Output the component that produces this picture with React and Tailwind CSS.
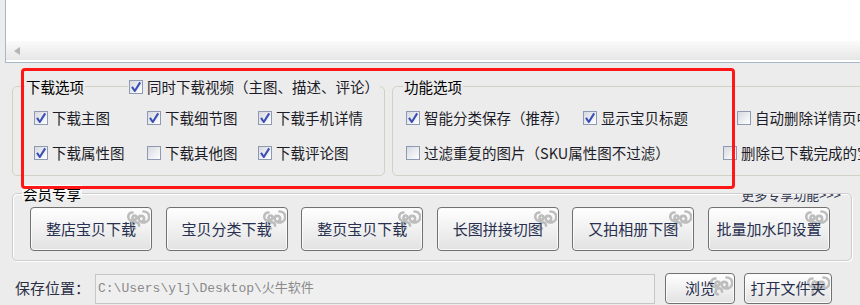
import React from 'react'

const cjk = "font-['Noto_Sans_CJK_SC',sans-serif]"

function Box({ checked }) {
  return (
    <span className="relative inline-block h-[14px] w-[14px] shrink-0 border border-[#8e9ab2] bg-gradient-to-br from-[#d6d9e1] to-white">
      {checked && (
        <svg viewBox="0 0 14 14" className="absolute left-[-1px] top-[-1px] h-[14px] w-[14px]">
          <path d="M3 6.8 L5.8 11 L11.2 2.4" fill="none" stroke="#3b4fb4" strokeWidth="2.1" strokeLinejoin="round" />
        </svg>
      )}
    </span>
  )
}

function Check({ checked, label, className = '' }) {
  return (
    <label className={`flex h-[20px] shrink-0 items-center gap-[4px] whitespace-nowrap text-[14.5px] leading-[20px] text-[#1c1c28] ${className}`}>
      <Box checked={checked} />
      {label}
    </label>
  )
}

function Swirl() {
  return (
    <svg viewBox="0 0 28 22" className="pointer-events-none absolute right-[1px] top-[1px] h-[22px] w-[28px]">
      <g fill="none" stroke="#bdbdbd" strokeWidth="2.6" strokeLinecap="round">
        <path d="M21.5 2.5 a5.5 5.5 0 1 1 -5 7.2 a2.8 2.8 0 1 1 3.1 2.8" />
        <path d="M10.5 3.5 a4.2 4.2 0 1 0 4 5.3 a2 2 0 1 0 -2.4 1.7" />
        <path d="M13 19.5 a3.2 3.2 0 1 1 4 -2.8" />
      </g>
    </svg>
  )
}

function Btn({ children, className = '' }) {
  return (
    <button className={`relative flex shrink-0 items-center justify-center rounded-[4px] border border-[#717171] bg-gradient-to-b from-white to-[#e2e2e2] text-[#28304f] shadow-[inset_0_0_0_1px_#fafafa] ${className}`}>
      <Swirl />
      <span className="relative">{children}</span>
    </button>
  )
}

export default function App() {
  return (
    <div className={`relative h-[305px] w-[860px] overflow-hidden bg-[#ececec] ${cjk}`}>
      {/* result list */}
      <div className="ml-[5px] flex h-[63px] flex-col border-b border-l border-[#a6b8ca] bg-white">
        <div className="flex-1" />
        <div className="mb-[2px] flex h-[19px] items-center bg-gradient-to-b from-[#fbfbfb] to-[#e6e6e6] pl-[8px]">
          <svg viewBox="0 0 6 8" className="h-[8px] w-[6px]">
            <path d="M6 0 L0 4 L6 8 Z" fill="#b4b4b4" />
          </svg>
        </div>
      </div>

      {/* option groups */}
      <div className="ml-[12px] mt-[23px] flex gap-[7px]">
        <div className="h-[90px] w-[373px] shrink-0 rounded-[5px] border border-[#d2d2c4]">
          <div className="-mt-[9px] flex h-[17px] items-center">
            <span className="ml-[12px] bg-[#ececec] px-[1px] text-[14.5px] leading-[17px] text-black">下载选项</span>
            <div className="ml-[43px] bg-[#ececec] px-[1px]">
              <Check checked label="同时下载视频（主图、描述、评论）" />
            </div>
          </div>
          <div className="mt-[13px] grid grid-cols-[113px_111px_auto] gap-y-[15px] pl-[21px]">
            <Check checked label="下载主图" />
            <Check checked label="下载细节图" />
            <Check checked label="下载手机详情" />
            <Check checked label="下载属性图" />
            <Check label="下载其他图" />
            <Check checked label="下载评论图" />
          </div>
        </div>

        <div className="h-[90px] w-[620px] shrink-0 rounded-[5px] border border-[#d2d2c4]">
          <div className="-mt-[9px] flex h-[17px] items-center">
            <span className="ml-[10px] bg-[#ececec] px-[1px] text-[14.5px] leading-[17px] text-black">功能选项</span>
          </div>
          <div className="mt-[13px] flex flex-col gap-[15px] pl-[13px]">
            <div className="flex">
              <Check checked label="智能分类保存（推荐）" className="w-[177px]" />
              <Check checked label="显示宝贝标题" className="w-[154px]" />
              <Check label="自动删除详情页中的图片" />
            </div>
            <div className="flex">
              <Check label="过滤重复的图片（SKU属性图不过滤）" className="w-[317px]" />
              <Check label="删除已下载完成的宝贝" />
            </div>
          </div>
        </div>
      </div>

      {/* member area */}
      <div className="ml-[12px] mt-[17px] h-[68px] w-[840px] rounded-[5px] border border-[#cdcdcd] shadow-[inset_1px_1px_0_#fff,1px_1px_0_#fff]">
        <div className="-mt-[9px] flex h-[17px] items-start justify-between">
          <span className="ml-[9px] bg-gradient-to-b from-white to-[#ececec] px-[1px] text-[14.5px] leading-[17px] text-black">会员专享</span>
          <div className="mr-[10px] mt-[9px] h-[8px] overflow-hidden">
            <div className="-mt-[7px] text-[13px] leading-[16px] text-[#30364f]">更多专享功能&gt;&gt;&gt;</div>
          </div>
        </div>
        <div className="mt-[5px] flex gap-[13.6px] pl-[17px]">
          {['整店宝贝下载', '宝贝分类下载', '整页宝贝下载', '长图拼接切图', '又拍相册下图', '批量加水印设置'].map((t) => (
            <Btn key={t} className="h-[44px] w-[122px] text-[15px]">
              {t}
            </Btn>
          ))}
        </div>
      </div>

      {/* save path */}
      <div className="mt-[12px] flex h-[31px] items-center">
        <span className="ml-[15px] w-[80px] text-[15px] text-[#2a2f45]">保存位置：</span>
        <div className="flex h-[30px] w-[560px] items-center border border-[#c6c6c6] bg-[#efefef] pl-[2px] font-['Liberation_Mono','Noto_Sans_CJK_SC',monospace] text-[13px] text-[#8a8a8a]">
          C:\Users\ylj\Desktop\火牛软件
        </div>
        <Btn className="ml-[10px] h-[31px] w-[70px] text-[15px]">浏览</Btn>
        <Btn className="ml-[9px] h-[31px] w-[88px] text-[15px]">打开文件夹</Btn>
      </div>

      {/* highlight drawn over the options */}
      <div className="pointer-events-none absolute left-[21px] top-[68px] h-[121px] w-[714px] rounded-[4px] border-[3px] border-[#ff1717]" />
    </div>
  )
}
